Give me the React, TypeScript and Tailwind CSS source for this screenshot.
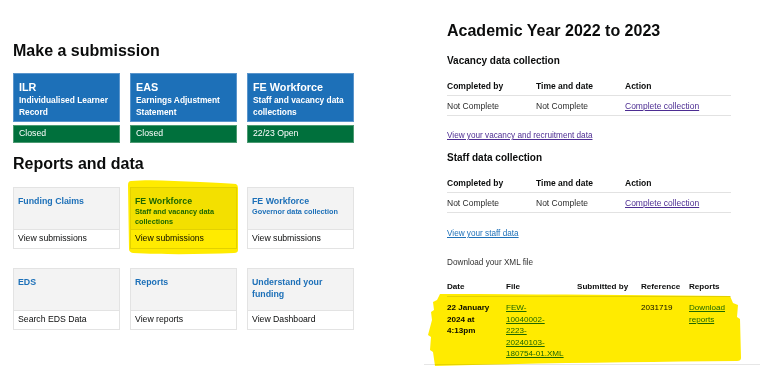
import React from "react";

const submissions = [
  { code: "ILR", lines: ["Individualised Learner", "Record"], status: "Closed" },
  { code: "EAS", lines: ["Earnings Adjustment", "Statement"], status: "Closed" },
  { code: "FE Workforce", lines: ["Staff and vacancy data", "collections"], status: "22/23 Open" },
];

const reports = [
  { title: ["Funding Claims"], sub: [], link: "View submissions" },
  { title: ["FE Workforce"], sub: ["Staff and vacancy data", "collections"], link: "View submissions" },
  { title: ["FE Workforce"], sub: ["Governor data collection"], link: "View submissions" },
  { title: ["EDS"], sub: [], link: "Search EDS Data" },
  { title: ["Reports"], sub: [], link: "View reports" },
  { title: ["Understand your", "funding"], sub: [], link: "View Dashboard" },
];

function CollectionTable() {
  return (
    <div className="w-[284px] text-[8.5px] leading-[12px] text-[#0b0c0c]">
      <div className="grid grid-cols-[89px_89px_106px] h-[20px] items-center border-b border-[#e2e2e2] font-bold">
        <span>Completed by</span>
        <span>Time and date</span>
        <span>Action</span>
      </div>
      <div className="grid grid-cols-[89px_89px_106px] h-[20px] items-center border-b border-[#e2e2e2] text-[#2b2b2b]">
        <span>Not Complete</span>
        <span>Not Complete</span>
        <a className="text-[#4c2c92] underline underline-offset-1">Complete collection</a>
      </div>
    </div>
  );
}

export default function App() {
  return (
    <div className="relative w-[760px] h-[379px] bg-white overflow-hidden flex text-[#0b0c0c] font-['Liberation_Sans',Arial,sans-serif]">
      {/* Left: dashboard tiles */}
      <div className="w-[447px] pl-[13px] pt-[41px]">
        <h2 className="text-[16px] leading-[20px] font-bold">Make a submission</h2>
        <div className="mt-[12px] grid grid-cols-[107px_107px_107px] gap-x-[10px]">
          {submissions.map((s) => (
            <div key={s.code} className="flex flex-col">
              <div className="h-[49px] bg-[#1d70b8] text-white px-[5px] pt-[6px] border border-[#5a95cc]">
                <div className="text-[10.8px] leading-[14px] font-bold">{s.code}</div>
                {s.lines.map((l) => (
                  <div key={l} className="text-[8.4px] leading-[12px] font-bold">{l}</div>
                ))}
              </div>
              <div className="mt-[3px] h-[18px] bg-[#00703c] text-white px-[5px] flex items-center text-[8.7px] border border-[#4c9a72]">
                {s.status}
              </div>
            </div>
          ))}
        </div>

        <h2 className="mt-[11px] text-[16px] leading-[20px] font-bold">Reports and data</h2>
        <div className="mt-[13px] grid grid-cols-[107px_107px_107px] gap-x-[10px] gap-y-[19px]">
          {reports.map((r, i) => (
            <div key={i} className="border border-[#e3e3e3] flex flex-col">
              <div className="h-[42px] bg-[#f3f3f3] border-b border-[#e3e3e3] px-[4px] pt-[7px] text-[#1d70b8] font-bold">
                {r.title.map((t) => (
                  <div key={t} className="text-[8.8px] leading-[12px]">{t}</div>
                ))}
                {r.sub.map((t) => (
                  <div key={t} className="text-[7.3px] leading-[10px]">{t}</div>
                ))}
              </div>
              <div className="h-[18px] px-[4px] flex items-center text-[8.7px]">{r.link}</div>
            </div>
          ))}
        </div>
      </div>

      {/* Right: academic year detail */}
      <div className="flex-1 pt-[21px]">
        <h1 className="text-[16px] leading-[20px] font-bold">Academic Year 2022 to 2023</h1>
        <h3 className="mt-[13px] text-[10px] leading-[14px] font-bold">Vacancy data collection</h3>
        <div className="mt-[8px]">
          <CollectionTable />
        </div>
        <a className="block mt-[14px] text-[8.2px] leading-[12px] text-[#4c2c92] underline underline-offset-1">
          View your vacancy and recruitment data
        </a>
        <h3 className="mt-[9px] text-[10px] leading-[14px] font-bold">Staff data collection</h3>
        <div className="mt-[8px]">
          <CollectionTable />
        </div>
        <a className="block mt-[15px] text-[8.2px] leading-[12px] text-[#1d70b8] underline underline-offset-1">
          View your staff data
        </a>
        <p className="mt-[17px] text-[8.2px] leading-[12px] text-[#333]">Download your XML file</p>

        <div className="mt-[9px] w-[284px] text-[8.1px] leading-[11.5px]">
          <div className="grid grid-cols-[59px_71px_64px_48px_42px] h-[19px] items-center border-b border-[#e2e2e2] font-bold">
            <span>Date</span>
            <span>File</span>
            <span>Submitted by</span>
            <span>Reference</span>
            <span>Reports</span>
          </div>
          <div className="grid grid-cols-[59px_71px_64px_48px_42px] pt-[5px] pb-[2px]">
            <span className="font-bold">
              22 January
              <br />
              2024 at
              <br />
              4:13pm
            </span>
            <a className="text-[#1d70b8] underline underline-offset-1">
              FEW-
              <br />
              10040002-
              <br />
              2223-
              <br />
              20240103-
              <br />
              180754-01.XML
            </a>
            <span></span>
            <span>2031719</span>
            <a className="text-[#1d70b8] underline underline-offset-1">
              Download
              <br />
              reports
            </a>
          </div>
        </div>
        <div className="mt-[2px] ml-[-23px] w-[336px] h-px bg-[#e6e6e6]" />
      </div>

      {/* Highlighter marks */}
      <svg
        className="absolute left-0 top-0 pointer-events-none mix-blend-multiply"
        width="760"
        height="379"
        viewBox="0 0 760 379"
      >
        <path
          d="M131 181 C 150 179, 175 181, 200 182 C 215 183, 228 183, 236 184 Q 238 185 238 188 L 238 250 Q 238 253 234 253 C 205 254, 170 255, 133 253 Q 129 252 129 249 L 128 185 Q 128 181 131 181 Z"
          fill="#ffeb00"
        />
        <path
          d="M440 294 C 540 294, 640 295, 730 296 L 733 303 L 738 305 L 737 317 L 740 319 L 741 358 Q 741 361 737 361 C 640 362, 540 363, 435 366 L 433 352 L 430 350 L 431 337 L 428 335 L 432 320 L 431 312 L 434 310 L 433 302 L 437 300 Z"
          fill="#ffeb00"
        />
      </svg>
    </div>
  );
}
